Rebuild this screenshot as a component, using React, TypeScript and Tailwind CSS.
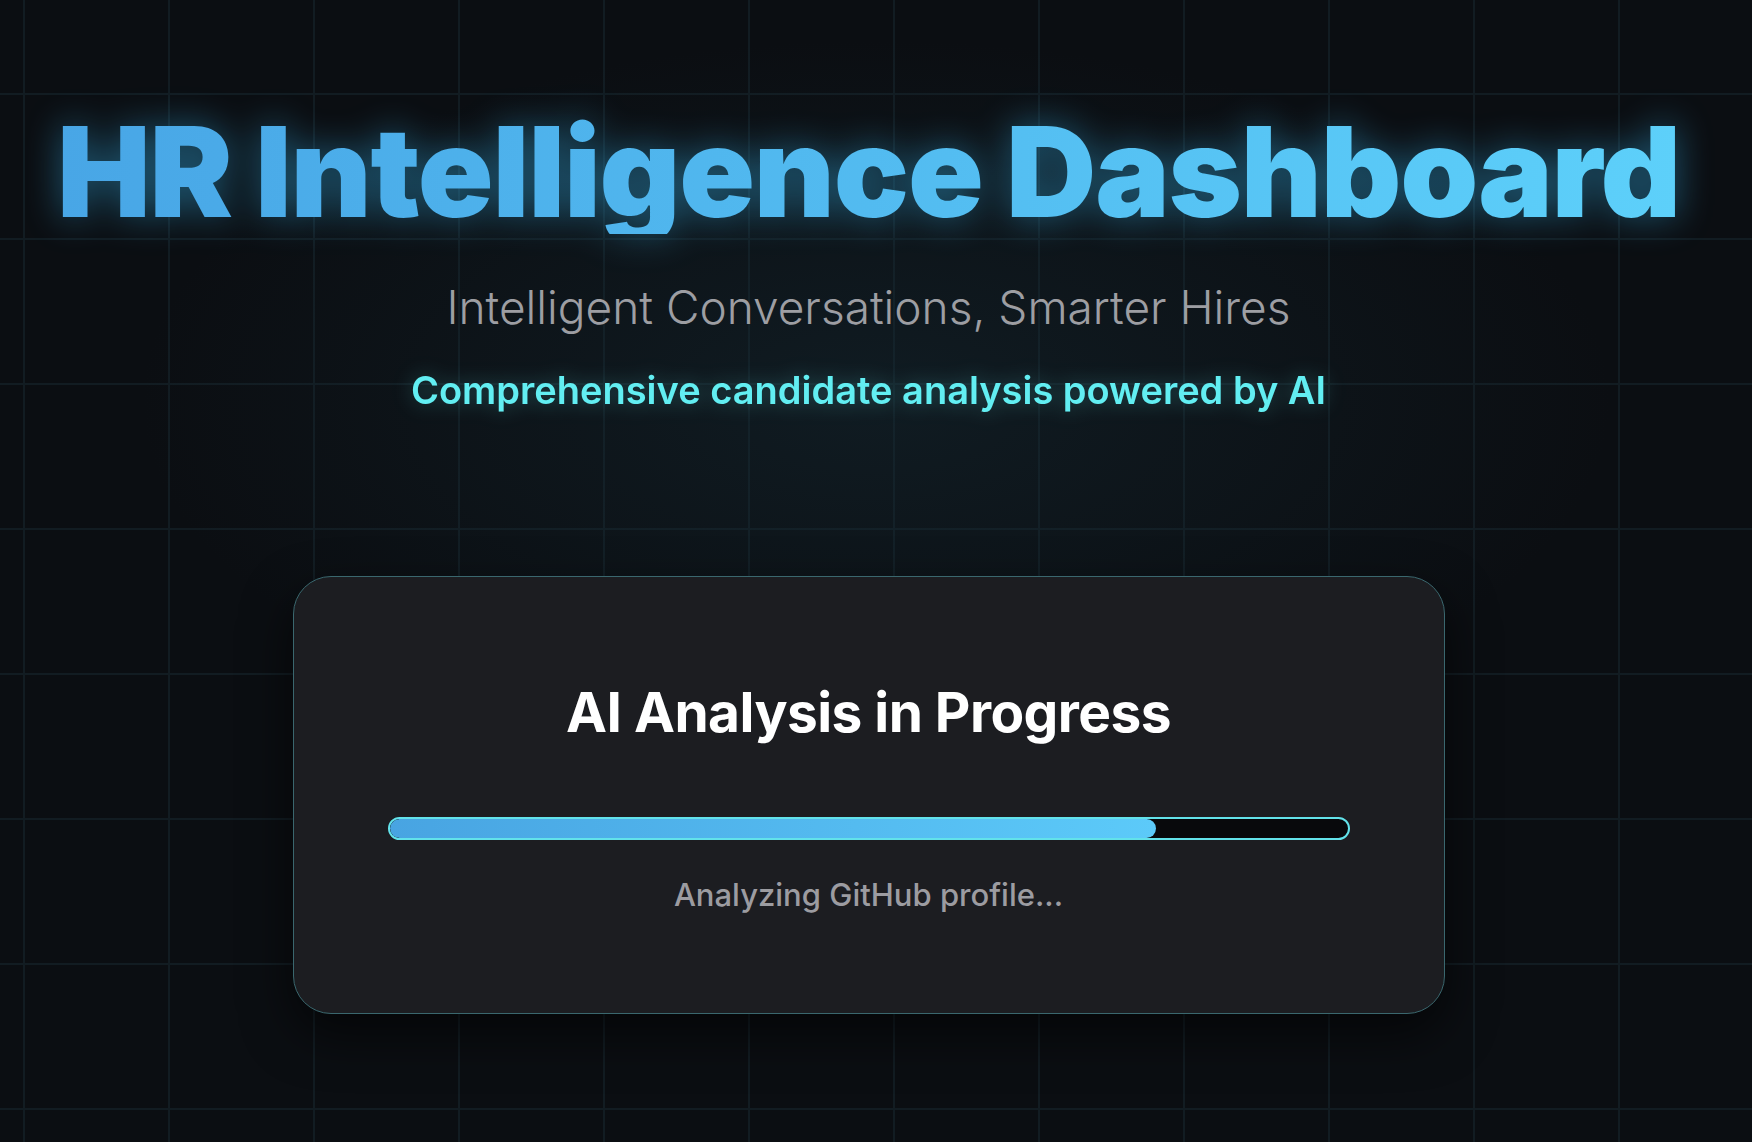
import React from "react";

const progress = 80;

export default function App() {
  return (
    <div className="min-h-screen w-full bg-[#0b0e12] bg-[radial-gradient(ellipse_60%_45%_at_50%_35%,rgba(22,44,54,0.45),transparent_70%),linear-gradient(to_right,#121c22_2px,transparent_2px),linear-gradient(to_bottom,#121c22_2px,transparent_2px)] bg-[size:100%_100%,145px_145px,145px_145px] bg-[position:0_0,23px_93px,23px_93px] font-['Inter','Noto_Sans',sans-serif] pr-[15px]">
      <div className="flex flex-col items-center pt-[109px] pb-[131px]">
        {/* Header */}
        <h1 className="text-[125px] leading-none font-black tracking-[-0.01em] bg-gradient-to-r from-[#48a6e6] to-[#5dd0fa] bg-clip-text text-transparent drop-shadow-[0_0_18px_rgba(56,189,248,0.45)]">
          HR Intelligence Dashboard
        </h1>
        <p className="mt-[50px] text-[46px] leading-none font-light text-[#9d9ea3]">
          Intelligent Conversations, Smarter Hires
        </p>
        <p className="mt-[41px] text-[38px] leading-none font-semibold text-[#62eef2] drop-shadow-[0_0_10px_rgba(94,234,240,0.3)]">
          Comprehensive candidate analysis powered by AI
        </p>

        {/* Progress card */}
        <div className="mt-[167px] w-full max-w-6xl rounded-[38px] border border-[#3a676e] bg-[#1c1d21] px-[94px] pt-[108px] pb-[103px] shadow-[0_20px_50px_rgba(0,0,0,0.6)]">
          <h2 className="text-center text-[55px] leading-none font-bold text-white tracking-[-0.01em]">
            AI Analysis in Progress
          </h2>
          <div className="mt-[77px] h-[23px] w-full rounded-full border-2 border-[#62e2ea] bg-[#08090c] overflow-hidden">
            <div
              className="h-full rounded-full bg-gradient-to-r from-[#48a4e2] to-[#5ccaf9]"
              style={{ width: `${progress}%` }}
            />
          </div>
          <p className="mt-[39px] text-center text-[31px] leading-none font-medium text-[#9c9ca1]">
            Analyzing GitHub profile...
          </p>
        </div>
      </div>
    </div>
  );
}
